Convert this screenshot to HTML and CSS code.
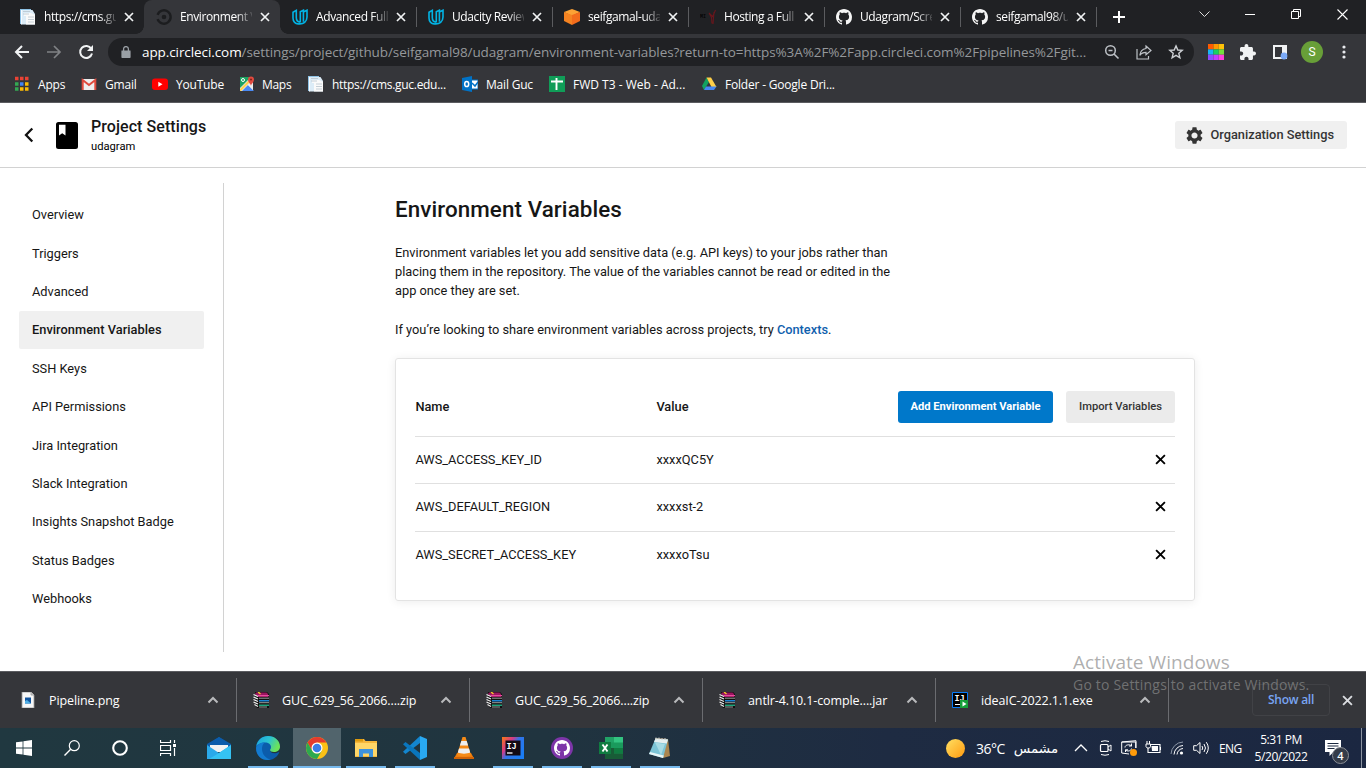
FILE: index.html
```html
<!DOCTYPE html>
<html lang="en">
<head>
<meta charset="utf-8">
<title>Environment Variables</title>
<link rel="stylesheet" href="styles.css">
</head>
<body>
<svg class="defs" width="0" height="0" aria-hidden="true">
  <defs>
    <symbol id="close" viewBox="0 0 10 10"><path d="M1 1l8 8M9 1L1 9" fill="none" stroke="currentColor" stroke-width="1.700"/></symbol>
    <symbol id="up" viewBox="0 0 12 8"><path d="M1.500 6.500L6 2l4.500 4.500" fill="none" stroke="currentColor" stroke-width="2"/></symbol>
    <symbol id="github" viewBox="0 0 16 16"><path fill="currentColor" d="M8 0C3.580 0 0 3.580 0 8c0 3.540 2.290 6.530 5.470 7.590.4.070.55-.17.55-.38 0-.19-.01-.82-.01-1.490-2.010.37-2.530-.49-2.690-.94-.09-.23-.48-.94-.82-1.130-.28-.15-.68-.52-.01-.53.63-.01 1.080.58 1.230.82.72 1.210 1.870.87 2.330.66.070-.52.28-.87.51-1.070-1.780-.2-3.640-.89-3.640-3.950 0-.87.31-1.590.82-2.150-.08-.2-.36-1.020.08-2.120 0 0 .67-.21 2.200.82.64-.18 1.320-.27 2-.27s1.360.09 2 .27c1.530-1.040 2.200-.82 2.200-.82.44 1.100.16 1.920.08 2.120.51.56.82 1.270.82 2.150 0 3.070-1.870 3.750-3.650 3.950.29.25.54.73.54 1.480 0 1.070-.01 1.930-.01 2.200 0 .21.15.46.55.38A8.010 8.010 0 0 0 16 8c0-4.420-3.580-8-8-8z"/></symbol>
    <symbol id="page" viewBox="0 0 16 16"><path d="M0 0h11v15H0z" fill="#8fc3e6"/><path d="M1.500 1h11l2.500 4v10.500H1.500z" fill="#dcecf7"/><path d="M4 4h7l4 2v9.500H6V7H4z" fill="#fafafa"/><path d="M3 2.500h7M3 5h6M8 8h6M8 10.500h6M8 13h6" stroke="#b8c4cd" stroke-width=".8"/><path d="M1.500 1v14.500" stroke="#f7fbff" stroke-width="1"/></symbol>
    <symbol id="udacity" viewBox="0 0 16 16"><path d="M6.800 14.800C3.300 15.200 1 12.600 1 9V3.200L4.300 1.400V8.500C4.300 11.300 5.500 13 8.300 13.300M8.300 13.300V2.800L11.400 1.200V12.700M6.800 14.800C11.500 15.300 15 12.500 15 8V1.200L11.400 3" fill="none" stroke="#02b3e4" stroke-width="1.600"/></symbol>
    <symbol id="winrar" viewBox="0 0 16 16"><path d="M2 0h12l2 2v14H4L2 13z" fill="#101010"/><path d="M3 .5h10.500L15 2v3H5L2 2z" fill="#9c1560"/><path d="M5 3h11v1.200H5z" fill="#e84c9f"/><path d="M6 8h10v1.500H6z" fill="#1a83d1"/><path d="M6 12.500h10V14H6z" fill="#1fa37a"/><path d="M6 6.200h10M6 10.700h10M6 15h8" stroke="#d8d8d8" stroke-width=".7"/><path d="M.5 2.500l4.500 2M.5 5l4.500 2M.5 7.500l4.500 2M.5 10l4.500 2M1.500 12.500l3.500 2" stroke="#eee" stroke-width="1.300"/><path d="M5 0l2.500 2" stroke="#f4ca28" stroke-width="1.500"/></symbol>
  </defs>
</svg>

<div class="tabstrip">
  <div class="tab"><svg class="fav"><use href="#page"/></svg><span class="tab-title">https://cms.gu</span><svg class="x"><use href="#close"/></svg></div>
  <div class="tab active"><svg class="fav" viewBox="0 0 16 16"><path d="M1.600 5.800A6.700 6.700 0 1 1 1.600 10.200" fill="none" stroke="#1c1d1f" stroke-width="2.400"/><circle cx="8" cy="8" r="2.300" fill="#1c1d1f"/></svg><span class="tab-title">Environment V</span><svg class="x"><use href="#close"/></svg></div>
  <div class="tab sep"><svg class="fav"><use href="#udacity"/></svg><span class="tab-title">Advanced Full</span><svg class="x"><use href="#close"/></svg></div>
  <div class="tab sep"><svg class="fav"><use href="#udacity"/></svg><span class="tab-title">Udacity Review</span><svg class="x"><use href="#close"/></svg></div>
  <div class="tab sep"><svg class="fav" viewBox="0 0 16 16"><path d="M8 0l8 3-8 4-8-4z" fill="#fca235"/><path d="M0 3l8 3v10l-8-4z" fill="#f58321"/><path d="M16 3L8 6v10l8-4z" fill="#f36c1c"/></svg><span class="tab-title">seifgamal-uda</span><svg class="x"><use href="#close"/></svg></div>
  <div class="tab sep"><svg class="fav" viewBox="0 0 16 16"><text x="0" y="9" font-family="Liberation Mono" font-weight="700" font-size="5" fill="#050505">MI</text><path d="M9 4l2.500 4.500.5 6M15.500 1l-3 7M14 3l-1 12M9 4l4 4" fill="none" stroke="#69161c" stroke-width="1.100"/></svg><span class="tab-title">Hosting a Full</span><svg class="x"><use href="#close"/></svg></div>
  <div class="tab sep"><svg class="fav"><use href="#github"/></svg><span class="tab-title">Udagram/Scre</span><svg class="x"><use href="#close"/></svg></div>
  <div class="tab sep"><svg class="fav"><use href="#github"/></svg><span class="tab-title">seifgamal98/u</span><svg class="x"><use href="#close"/></svg></div>
  <svg class="newtab" viewBox="0 0 12 12"><path d="M6 0v12M0 6h12" stroke="#fff" stroke-width="2"/></svg>
  <div class="winctl">
    <svg width="11" height="12" viewBox="0 0 11 12"><path d="M.5 3.500l5 5 5-5" fill="none" stroke="#ddd"/></svg>
    <svg width="11" height="12" viewBox="0 0 11 12"><path d="M0 6.500h10" stroke="#fff"/></svg>
    <svg width="11" height="12" viewBox="0 0 11 12"><path d="M.5 3.500h7v7h-7zM2.500 3.500v-2h7v7h-2" fill="none" stroke="#fff"/></svg>
    <svg width="11" height="12" viewBox="0 0 11 12"><path d="M.5 1.500l10 10M10.500 1.500l-10 10" stroke="#fff" stroke-width="1.100"/></svg>
  </div>
</div>

<div class="toolbar">
  <svg class="nav" viewBox="0 0 16 16"><path d="M15 8H2M8 2L2 8l6 6" fill="none" stroke="#f1f3f4" stroke-width="2"/></svg>
  <svg class="nav" viewBox="0 0 16 16"><path d="M1 8h13M8 2l6 6-6 6" fill="none" stroke="#808285" stroke-width="1.700"/></svg>
  <svg class="nav" viewBox="0 0 16 16"><path d="M13.300 4.800A6 6 0 1 0 14 9.500" fill="none" stroke="#f1f3f4" stroke-width="2"/><path d="M15 1v6H9z" fill="#f1f3f4"/></svg>
  <div class="omnibox">
    <svg class="lock" viewBox="0 0 10 12"><path d="M1 4.500h8c.6 0 .6.300.6.700v6c0 .4-.3.800-.8.800H1.200c-.5 0-.8-.4-.8-.8v-6c0-.4 0-.7.600-.7z" fill="#9aa0a6"/><path d="M2.600 5V3a2.400 2.400 0 0 1 4.800 0v2" fill="none" stroke="#9aa0a6" stroke-width="1.300"/></svg>
    <span class="url"><b>app.circleci.com</b>/settings/project/github/seifgamal98/udagram/environment-variables?return-to=https%3A%2F%2Fapp.circleci.com%2Fpipelines%2Fgit...</span>
    <svg class="oi" viewBox="0 0 16 16"><circle cx="6.500" cy="6.500" r="4.800" fill="none" stroke="#bdc1c6" stroke-width="1.500"/><path d="M10 10l4.500 4.500M4.500 6.500h4" stroke="#bdc1c6" stroke-width="1.600"/></svg>
    <svg class="oi" viewBox="0 0 16 16"><path d="M1 5v10h11.500v-3" fill="none" stroke="#bdc1c6" stroke-width="1.200"/><path d="M10 2l5 4.500-5 4.300V8.300C7 8.300 5.200 9.200 3.800 11.300 4.200 8 6 5 10 4.500z" fill="none" stroke="#bdc1c6" stroke-width="1.200"/></svg>
    <svg class="oi" viewBox="0 0 16 16"><path d="M8 1.900l1.800 4.100 4.400.4-3.400 2.900 1.100 4.500L8 11.400l-3.900 2.400 1.100-4.500-3.400-2.900 4.400-.4z" fill="none" stroke="#cdd0d4" stroke-width="1.400"/></svg>
  </div>
  <div class="exts">
    <svg viewBox="0 0 16 16"><path fill="#ff5a00" d="M0 0h5.400v5.400H0z"/><path fill="#ff9800" d="M5.400 0h5.300v5.400H5.400z"/><path fill="#ffc107" d="M10.700 0H16v5.400h-5.300z"/><path fill="#18b7f5" d="M0 5.400h5.400v5.300H0z"/><path fill="#17d163" d="M5.400 5.400h5.300v5.300H5.400z"/><path fill="#74df3b" d="M10.700 5.400H16v5.300h-5.300z"/><path fill="#8b4dff" d="M0 10.700h5.400V16H0z"/><path fill="#c13dff" d="M5.400 10.700h5.300V16H5.400z"/><path fill="#ff3ddd" d="M10.700 10.700H16V16h-5.300z"/></svg>
    <svg viewBox="2 1 21 21"><path fill="#f1f3f4" d="M20.500 11H19V7c0-1.100-.9-2-2-2h-4V3.500C13 2.120 11.880 1 10.500 1S8 2.120 8 3.500V5H4c-1.100 0-1.990.9-1.990 2v3.800H3.500c1.490 0 2.700 1.210 2.700 2.700s-1.210 2.700-2.700 2.700H2V20c0 1.100.9 2 2 2h3.800v-1.500c0-1.490 1.210-2.700 2.700-2.700s2.700 1.210 2.700 2.700V22H17c1.100 0 2-.9 2-2v-4h1.500c1.380 0 2.500-1.120 2.500-2.500S21.880 11 20.500 11z"/></svg>
    <svg viewBox="0 0 16 16"><path d="M2 2h12v12H2z" fill="none" stroke="#f1f3f4" stroke-width="2"/><path d="M10 2h4v7h-4z" fill="#f1f3f4"/><circle cx="12" cy="12" r="3.400" fill="#7baaf7"/></svg>
    <span class="avatar">S</span>
    <svg viewBox="0 0 16 16"><g fill="#e8eaed"><circle cx="8" cy="3" r="1.600"/><circle cx="8" cy="8" r="1.600"/><circle cx="8" cy="13" r="1.600"/></g></svg>
  </div>
</div>

<div class="bookmarks">
  <svg viewBox="0 0 16 16"><path stroke="#ea4335" stroke-width="3.500" stroke-dasharray="3.500 1.500" d="M1 2.500h14"/><path stroke="#34a853" stroke-width="3.500" d="M1 8h3.500M1 13h3.500"/><path stroke="#4285f4" stroke-width="3.500" d="M6 8h3.500"/><path stroke="#fbbc04" stroke-width="3.500" d="M11 8h3.500M6 13h3.500M11 13h3.500"/></svg><span>Apps</span>
  <svg viewBox="0 0 16 16"><path d="M1 3h14v11H1z" fill="#eee"/><path d="M1.700 14V4L8 9l6.300-5v10" fill="none" stroke="#df4b3e" stroke-width="2"/></svg><span>Gmail</span>
  <svg viewBox="0 0 16 16"><rect y="2.500" width="16" height="11.500" rx="3" fill="#f00"/><path d="M6.300 5.700l4.200 2.500-4.200 2.500z" fill="#fff"/></svg><span>YouTube</span>
  <svg viewBox="0 0 16 16"><path d="M1 1h13v14H1z" fill="#e9e9e9"/><path d="M1 1h11L1 12z" fill="#1ca261"/><path d="M3 15l6-6 6 6z" fill="#4a89f3"/><path d="M1 13L12 2l1 2L2 15H1z" fill="#ffd04b"/><path d="M9 9l5 5V6z" fill="#eee"/><circle cx="4" cy="4" r="1.500" fill="none" stroke="#fff"/><path d="M12 10c0-2-3-3.500-3-6.500a3 3 0 0 1 6 0c0 3-3 4.500-3 6.500z" fill="#e04a3f"/><circle cx="12" cy="3.500" r="1" fill="#7b2018"/></svg><span class="tight">Maps</span>
  <svg viewBox="0 0 16 16"><use href="#page"/></svg><span class="tight">https://cms.guc.edu...</span>
  <svg viewBox="0 0 16 16"><path d="M8 4h8v9H8z" fill="#fff" stroke="#0072c6"/><path d="M10 7l3 3 3-4" stroke="#0072c6" fill="none" stroke-width="1.500"/><path d="M0 2l10-2v16L0 14z" fill="#0072c6"/><ellipse cx="4.700" cy="8" rx="2" ry="2.600" fill="none" stroke="#fff" stroke-width="1.500"/></svg><span>Mail Guc</span>
  <svg viewBox="0 0 16 16"><path d="M0 0h16v16H0z" fill="#109d58"/><path d="M2 5.500h12M7.500 2v12" stroke="#fff" stroke-width="1.900"/></svg><span class="loose">FWD T3 - Web - Ad...</span>
  <svg viewBox="0 0 16 16"><path d="M5.500 1.500L1 10l2 4 5-8z" fill="#12a260"/><path d="M5.500 1.500H10L15.500 11h-5z" fill="#ffcf48"/><path d="M3 14l2-3.500h10.500L13 14z" fill="#4688f4"/></svg><span>Folder - Google Dri...</span>
</div>

<div class="page">
  <header class="page-head">
    <svg class="back" viewBox="0 0 10 16"><path d="M8.300 1.500L2 8l6.300 6.500" fill="none" stroke="#111" stroke-width="2.300"/></svg>
    <svg class="book" viewBox="0 0 22 27"><path d="M2.500 0h17A2.500 2.500 0 0 1 22 2.500v22a2.500 2.500 0 0 1-2.500 2.500h-17A2.500 2.500 0 0 1 0 24.500v-22A2.500 2.500 0 0 1 2.500 0z" fill="#000"/><path d="M3 2.700h6.500v10.800L6.200 11.300 3 13.500z" fill="#fff"/></svg>
    <div class="names"><div class="ptitle">Project Settings</div><div class="pname">udagram</div></div>
    <button class="org"><svg viewBox="2 2 20 20"><path fill="#343434" d="M19.140 12.940c.04-.3.060-.61.060-.94 0-.32-.02-.64-.07-.94l2.030-1.580c.18-.14.23-.41.12-.61l-1.920-3.320c-.12-.22-.37-.29-.59-.22l-2.390.96c-.5-.38-1.030-.7-1.620-.94l-.36-2.540c-.04-.24-.24-.41-.48-.41h-3.840c-.24 0-.43.17-.47.41l-.36 2.540c-.59.24-1.130.57-1.620.94l-2.390-.96c-.22-.08-.47 0-.59.22L2.740 8.870c-.12.21-.08.47.12.61l2.030 1.580c-.05.3-.09.63-.09.94s.02.64.07.94l-2.030 1.580c-.18.14-.23.41-.12.61l1.920 3.320c.12.22.37.29.59.22l2.390-.96c.5.38 1.030.7 1.620.94l.36 2.540c.05.24.24.41.48.41h3.840c.24 0 .44-.17.47-.41l.36-2.540c.59-.24 1.130-.56 1.620-.94l2.390.96c.22.080.47 0 .59-.22l1.920-3.320c.12-.22.070-.47-.12-.61l-2.010-1.580zM12 15.600c-1.980 0-3.600-1.620-3.600-3.600s1.620-3.600 3.600-3.600 3.600 1.620 3.600 3.600-1.620 3.600-3.600 3.600z"/></svg>Organization Settings</button>
  </header>
  <div class="page-body">
    <nav class="side">
      <a>Overview</a><a>Triggers</a><a>Advanced</a><a class="on">Environment Variables</a><a>SSH Keys</a><a>API Permissions</a><a>Jira Integration</a><a>Slack Integration</a><a>Insights Snapshot Badge</a><a>Status Badges</a><a>Webhooks</a>
    </nav>
    <main class="main">
      <h1>Environment Variables</h1>
      <p>Environment variables let you add sensitive data (e.g. API keys) to your jobs rather than placing them in the repository. The value of the variables cannot be read or edited in the app once they are set.</p>
      <p>If you’re looking to share environment variables across projects, try <a class="link">Contexts</a>.</p>
      <section class="card">
        <div class="row head"><span>Name</span><span>Value</span><span class="btns"><button class="btn primary">Add Environment Variable</button><button class="btn">Import Variables</button></span></div>
        <div class="row"><span>AWS_ACCESS_KEY_ID</span><span>xxxxQC5Y</span><svg class="del"><use href="#close"/></svg></div>
        <div class="row"><span>AWS_DEFAULT_REGION</span><span>xxxxst-2</span><svg class="del"><use href="#close"/></svg></div>
        <div class="row"><span>AWS_SECRET_ACCESS_KEY</span><span>xxxxoTsu</span><svg class="del"><use href="#close"/></svg></div>
      </section>
    </main>
  </div>
</div>

<div class="downloads">
  <div class="dl"><svg class="fi" viewBox="0 0 16 16"><path d="M2 0h9l3 3v13H2z" fill="#f7f7f7" stroke="#999" stroke-width=".8"/><path d="M11 0v3h3" fill="#ccc" stroke="#999" stroke-width=".8"/><path d="M5 5.500h6v6H5z" fill="#12559e"/><path d="M5 9l2-1 4 3.500H5z" fill="#4fb0e6"/></svg><span>Pipeline.png</span><svg class="up"><use href="#up"/></svg></div>
  <div class="dl"><svg class="fi"><use href="#winrar"/></svg><span>GUC_629_56_2066....zip</span><svg class="up"><use href="#up"/></svg></div>
  <div class="dl"><svg class="fi"><use href="#winrar"/></svg><span>GUC_629_56_2066....zip</span><svg class="up"><use href="#up"/></svg></div>
  <div class="dl"><svg class="fi"><use href="#winrar"/></svg><span>antlr-4.10.1-comple....jar</span><svg class="up"><use href="#up"/></svg></div>
  <div class="dl"><svg class="fi" viewBox="0 0 16 16"><path d="M.5.5h15v15H.5z" fill="#000" stroke="#087cfa"/><text x="2.500" y="9" font-family="Liberation Mono" font-weight="700" font-size="8.500" fill="#fff">IJ</text><path d="M3 12.500h5" stroke="#fff"/><path d="M8 8h8v8H8z" fill="#16a03a"/><path d="M10.500 9.500l4 2.500-4 2.500z" fill="#fff"/></svg><span>ideaIC-2022.1.1.exe</span><svg class="up"><use href="#up"/></svg></div>
  <span class="showall">Show all</span>
  <svg class="dlx"><use href="#close"/></svg>
</div>

<div class="taskbar">
  <div class="sys">
    <svg width="16" height="16" viewBox="0 0 16 16"><path d="M0 2.300L6.600 1.400v6.200H0zM7.400 1.300L16 0v7.600H7.400zM0 8.400h6.600v6.200L0 13.700zM7.400 8.400H16V16l-8.600-1.300z" fill="#fff"/></svg>
    <svg width="16" height="16" viewBox="0 0 16 16"><circle cx="10.300" cy="5.700" r="5" fill="none" stroke="#fff" stroke-width="1.200"/><path d="M6.700 9.300L.5 15.500" stroke="#fff" stroke-width="1.400"/></svg>
    <svg width="16" height="16" viewBox="0 0 16 16"><circle cx="8" cy="8" r="6.800" fill="none" stroke="#fff" stroke-width="2.100"/></svg>
    <svg width="16" height="16" viewBox="0 0 16 16"><path d="M.5 0v2.500h10V0M.5 16v-2.500h10V16M.5 5.500h10v5H.5zM14.500 0v3M14.500 8v8" fill="none" stroke="#fff" stroke-width="1.200"/><path d="M13 4h3v3h-3z" fill="#fff"/></svg>
  </div>
  <div class="apps">
    <div class="app"><svg viewBox="0 0 24 24"><path d="M0 9L12 1l12 8v3H0z" fill="#0b5cab"/><path d="M3 8h18v8H3z" fill="#f2f2f2"/><path d="M0 9l12 8 12-8v14H0z" fill="#2aa9ea"/><path d="M24 9v14H2l10-6z" fill="#35c2f3"/><path d="M2 8.500h20L12 15.500z" fill="#f2f2f2"/><path d="M0 8L12 1l12 7v1H0z" fill="#0b5cab"/></svg></div>
    <div class="app run"><svg viewBox="0 0 24 24"><defs><linearGradient id="eg" x1="0" y1="0" x2="1" y2=".4"><stop offset="0" stop-color="#1aa3e0"/><stop offset=".55" stop-color="#2bc3d2"/><stop offset="1" stop-color="#6be35a"/></linearGradient></defs><circle cx="12" cy="12" r="12" fill="#0b5cab"/><path d="M14 13.500c0 2 1.500 3.800 4.500 3.800 2 0 3.500-.6 5-1.500l1.500 1v-5h-8z" fill="#20353f"/><path d="M.3 10C1.500 4 6 0 12 0c7 0 12 5 12 10.500 0 4-3 5.500-6 5.500-2.500 0-4-1-4-2 0-.8 1-1 1-3C15 8.500 12.500 6.500 9 6.500 5 6.500 1.500 8.500.3 10z" fill="url(#eg)"/><path d="M.1 12C.5 8.500 4.500 6.500 9 6.500c-2.500 1.500-3 4-3 6.500 0 5 3.500 9.500 9 10.600C7 25.500 0 20.500.1 12z" fill="#137bd0"/></svg></div>
    <div class="app run cur"><svg viewBox="-12 -12 24 24"><circle r="11" fill="#fbc116"/><path d="M-9.500-5.500A11 11 0 0 1 9.500-5.500H0L-4.800 2.700z" fill="#e33b2e"/><path d="M-9.500-5.500A11 11 0 0 0 0 11L4.800 2.700A5.500 5.500 0 0 1-4.800 2.700z" fill="#2da94f"/><circle r="5.500" fill="#fff"/><circle r="4.300" fill="#3a7de8"/></svg></div>
    <div class="app run"><svg viewBox="0 0 24 24"><path d="M1 3h9l1.500 2H23v16H1z" fill="#f6b73c"/><path d="M1 7h22v13H1z" fill="#ffd667"/><path d="M1 3h8v2.500H1z" fill="#dd9a0e"/><path d="M5 21v-8h14v8h-4v-3.500H9V21z" fill="#3d92dd"/></svg></div>
    <div class="app run"><svg viewBox="0 0 24 24"><path d="M17 0l7 3v18l-7 3z" fill="#29a9f2"/><path d="M17 0v7L2.500 18 0 15.800z" fill="#1386cf"/><path d="M0 8.200L2.500 6 17 17v7z" fill="#0a76bd"/></svg></div>
    <div class="app"><svg viewBox="0 0 24 24"><path d="M5 17h14l3 5.500H2z" fill="#ef7d0c"/><path d="M10.500 1h3L19 19c-3 2-11 2-14 0z" fill="#f58a16"/><path d="M9.300 5h5.400l1.400 4.500H7.900zM7 12.500h10l1.200 4c-3 1.500-9.400 1.500-12.400 0z" fill="#eee"/><path d="M2 21h20v2H2z" fill="#cf6206"/></svg></div>
    <div class="app run"><svg viewBox="0 0 24 24"><defs><linearGradient id="ij" x1="0" y1="0" x2="1" y2=".7"><stop offset="0" stop-color="#f97a12"/><stop offset=".35" stop-color="#d43a86"/><stop offset=".55" stop-color="#3274e8"/><stop offset="1" stop-color="#1a7df5"/></linearGradient></defs><path d="M1 1h22v22H1z" fill="url(#ij)"/><path d="M4.500 4.500h15v15h-15z" fill="#120a14"/><text x="5.500" y="12.500" font-family="Liberation Mono" font-weight="700" font-size="8.500" fill="#fff">IJ</text><path d="M6 17h5.500" stroke="#fff" stroke-width="1.300"/></svg></div>
    <div class="app run"><svg viewBox="0 0 24 24"><circle cx="12" cy="12" r="11" fill="#7d35a8"/><svg x="4" y="4" width="16" height="16" color="#fff"><use href="#github"/></svg></svg></div>
    <div class="app run"><svg viewBox="0 0 24 24"><path d="M6 1h18v22H6z" fill="#1a9a5c"/><path d="M6 1h9v5.500H6z" fill="#21a366"/><path d="M15 1h9v5.500h-9z" fill="#33c481"/><path d="M6 12h9v11H6z" fill="#185c37"/><path d="M15 12h9v5.500h-9z" fill="#107c41"/><path d="M15 17.500h9V23h-9z" fill="#185c37"/><path d="M0 6h12v12H0z" fill="#107c41"/><path d="M3.500 8.500l5 7M8.500 8.500l-5 7" stroke="#fff" stroke-width="1.900"/></svg></div>
    <div class="app run"><svg viewBox="0 0 24 24"><path d="M7 2l13 1 2 17-7 2z" fill="#aa8650"/><path d="M7.500 2.500L20 3.500 15 22 1 18z" fill="#7cc4d6"/><path d="M7.500 2.500L20 3.500l-1.300 4L6 6z" fill="#e6eff0"/><path d="M7 6.500L17 8l-4 11z" fill="#a6dbe5"/><path d="M1 18l14 4 .8-2.500L2 16z" fill="#e7f5f7"/><path d="M8 1.500v2M11 1.500v2M14 2v2M17 2v2" stroke="#ccc"/></svg></div>
  </div>
  <div class="weather"><i class="sun"></i><span>36°C</span><span class="ar" lang="ar" dir="rtl">مشمس</span></div>
  <div class="tray">
    <svg viewBox="0 0 16 16"><path d="M2 11l6-6 6 6" fill="none" stroke="#fff" stroke-width="1.300"/></svg>
    <svg viewBox="0 0 16 16"><rect x="3.500" y="4.500" width="7.500" height="7" rx="1" fill="none" stroke="#fff" stroke-width="1.200"/><path d="M11 7l3-2v6l-3-2M4 1.500q4-1.500 8 0M4 14.500q4 1.500 8 0" fill="none" stroke="#fff"/></svg>
    <svg viewBox="0 0 16 16"><path d="M8 14L.7 13V2h14v6M.7 2L15 .7V8" fill="none" stroke="#fff"/><path d="M4 7.500c0-3 5-3.500 6.500-1.500M10.500 3.500V6H8M10.500 8.500c-.5 3-4.500 3-6 1.500M4.500 12V9.800H7" fill="none" stroke="#fff"/><circle cx="12.500" cy="12.500" r="3.500" fill="#ff9b0a"/></svg>
    <svg viewBox="0 0 16 16"><path d="M5.500 4.500H15v8H5.500M3 8v4.500h2.500" fill="none" stroke="#fff" stroke-width="1.100"/><path d="M6.500 6H13v5H7zM15 7h1v3h-1z" fill="#fff"/><path d="M1 4h4.500v2.500L4.500 8H2.200L1 6.500zM2 1v3M4.500 1v3" fill="none" stroke="#fff"/></svg>
    <svg viewBox="0 0 16 16"><g fill="none" stroke="#fff"><path d="M14 5.500A9.500 9.500 0 0 0 5 14.500M14 8.500a6.500 6.500 0 0 0-6 6M14 11.500"/><path d="M14 2A12.500 12.500 0 0 0 2 14" stroke="#8d98a8"/></g><circle cx="12.500" cy="13" r="1.600" fill="#fff"/></svg>
    <svg viewBox="0 0 16 16"><path d="M.7 5.700h2.800L7 2.500v11l-3.500-3.200H.7zM9 6q1.500 2 0 4M11 4q3 4 0 8M13.300 2.200q4 5.800 0 11.600" fill="none" stroke="#fff"/></svg>
    <span class="eng">ENG</span>
  </div>
  <div class="clock"><span>5:31 PM</span><span>5/20/2022</span></div>
  <div class="notif"><svg width="17" height="17" viewBox="0 0 17 17"><path d="M0 0h16v12H8.500L4.500 16v-4H0z" fill="#fff"/><path d="M2.500 3.500h11M2.500 6h11M2.500 8.500h7" stroke="#1c2940"/></svg><span class="count">4</span></div>
</div>

<div class="activate"><div class="a1">Activate Windows</div><div class="a2">Go to Settings to activate Windows.</div></div>
</body>
</html>
```
FILE: styles.css
```css
* { box-sizing: border-box; }
body { margin: 0; width: 1366px; height: 768px; overflow: hidden; background: #fff; font: 12px "Open Sans", "Noto Sans", sans-serif; color: #fff; display: flex; flex-direction: column; position: relative; }
svg { display: block; flex: none; }
.defs { position: absolute; }
button { border: 0; margin: 0; font: inherit; }

/* tab strip */
.tabstrip { height: 34px; background: #202124; display: flex; align-items: center; padding-left: 8px; flex: none; }
.tab { width: 136px; height: 34px; padding-left: 12px; display: flex; align-items: center; flex: none; }
.tab .fav { width: 16px; height: 16px; color: #f5f5f5; }
.tab-title { width: 72px; margin-left: 8px; overflow: hidden; white-space: nowrap; letter-spacing: -.4px; line-height: 18px; -webkit-mask-image: linear-gradient(90deg, #000 56px, transparent 75px); mask-image: linear-gradient(90deg, #000 56px, transparent 75px); }
.tab .x { width: 10px; height: 10px; margin-left: 8px; color: #f1f3f4; }
.tab.active { background: #35363a; border-radius: 8px 8px 0 0; position: relative; }
.tab.active::before, .tab.active::after { content: ""; position: absolute; bottom: 0; width: 8px; height: 8px; }
.tab.active::before { left: -8px; background: radial-gradient(circle at 0 0, transparent 7.500px, #35363a 8px); }
.tab.active::after { right: -8px; background: radial-gradient(circle at 100% 0, transparent 7.500px, #35363a 8px); }
.tab.sep { box-shadow: none; }
.tab.sep + .tab.sep, .newtab { background: linear-gradient(#5b5c5f, #5b5c5f) 0 50% / 1px 20px no-repeat; }
.newtab { width: 29px; height: 20px; padding: 4px 0 4px 17px; }
.winctl { display: flex; gap: 35px; margin-left: auto; padding: 0 18px 6px 0; }

/* address row */
.toolbar { height: 36px; background: #35363a; display: flex; align-items: center; padding-left: 14px; flex: none; }
.nav { width: 16px; height: 16px; margin-right: 16px; }
.omnibox { width: 1086px; height: 28px; margin-left: -2px; border-radius: 14px; background: #202124; display: flex; align-items: center; padding-left: 13px; }
.lock { width: 10px; height: 12px; margin-right: 11px; margin-top: -1px; }
.url { width: 962px; flex: none; color: #95989b; font-size: 13.500px; letter-spacing: -.086px; white-space: nowrap; line-height: 20px; }
.url b { font-weight: 400; color: #fff; }
.oi { width: 16px; height: 16px; margin-right: 16px; }
.exts { display: flex; align-items: center; gap: 16px; padding-left: 14px; }
.exts svg { width: 16px; height: 16px; }
.avatar { width: 22px; height: 22px; margin: 0 -3px; border-radius: 50%; background: #689f38; font: 12px/22px Roboto, sans-serif; text-align: center; }

/* bookmarks */
.bookmarks { height: 33px; background: #35363a; border-bottom: 1px solid #5b5c60; display: grid; grid-template-columns: 24px 43px 24px 47px 24px 63px 23px 46px 24px 130px 24px 63px 24px 128px 24px 120px; align-items: center; padding-left: 14px; white-space: nowrap; letter-spacing: -.2px; padding-bottom: 4px; flex: none; }
.bookmarks svg { width: 16px; height: 16px; }
.bookmarks .tight { letter-spacing: -.3px; }
.bookmarks .loose { letter-spacing: 0; }

/* web page */
.page { height: 568px; flex: none; background: #fff; color: #161616; font: 12.800px/19.200px Roboto, sans-serif; }
.page-head { height: 65px; border-bottom: 1px solid #d2d2d2; display: flex; align-items: center; padding: 0 19px 0 24px; }
.back { width: 10px; height: 16px; }
.book { width: 22px; height: 27px; margin: 0 13px 0 22px; }
.ptitle { font-size: 16px; font-weight: 500; line-height: 22px; letter-spacing: .07px; }
.pname { font-size: 11.200px; line-height: 17px; color: #000; }
.org { margin-left: auto; width: 172px; height: 28px; padding: 0 0 0 11px; border-radius: 3px; background: #f0f0f0; color: #343434; font-weight: 500; display: flex; align-items: center; gap: 7.500px; white-space: nowrap; }
.org svg { width: 17px; height: 17px; }
.page-body { display: flex; padding-top: 15px; }
.side { width: 224px; height: 469px; border-right: 1px solid #d2d2d2; padding: 12.600px 19px 0; }
.side a { display: block; padding: 9.600px 0 9.600px 13px; }
.side .on { background: #f0f0f0; border-radius: 2px; font-weight: 500; letter-spacing: .04px; }
.main { width: 800px; margin-left: 171px; padding-top: 11px; }
h1 { margin: 0 0 19px; font-size: 22.400px; font-weight: 500; line-height: 30px; letter-spacing: .08px; }
p { margin: 0 0 19.200px; width: 512px; }
.link { color: #0f61ae; font-weight: 500; }
.card { height: 243px; border: 1px solid #e3e3e3; border-radius: 3px; box-shadow: 0 1px 10px rgba(0,0,0,.08); padding: 19px 19px 0; }
.row { display: grid; grid-template-columns: 241px 242px 1fr; align-items: center; height: 47.500px; border-top: 1px solid #e0e0e0; padding: 0 0 1px .4px; }
.row.head { height: 57.500px; border: 0; font-weight: 500; padding-bottom: 1.500px; }
.btns { display: flex; gap: 13px; margin: 1px 0 0 -.4px; }
.btn { width: 109px; height: 32px; border-radius: 3px; background: #ebebeb; color: #343434; font: 500 11.200px Roboto, sans-serif; padding: 0 0 1px; white-space: nowrap; }
.btn.primary { width: 155px; background: #0078ca; color: #fff; font-weight: 700; letter-spacing: -.03px; }
.del { width: 11px; height: 11px; justify-self: end; margin-right: 9px; color: #000; }

/* downloads shelf */
.downloads { height: 57px; border-top: 1px solid #5b5c60; background: #35363a; display: flex; align-items: center; padding-left: 4px; flex: none; }
.dl { width: 233px; height: 44px; border-right: 1px solid #6b6c70; display: flex; align-items: center; padding: 0 17px 0 16px; white-space: nowrap; font-size: 12.500px; }
.dl span { margin-left: 13px; letter-spacing: -.1px; }
.fi { width: 16px; height: 16px; }
.up { width: 12px; height: 8px; margin-left: auto; color: #b9babc; }
.showall { width: 78px; height: 32px; margin-left: 83px; border: 1px solid #414246; border-radius: 4px; color: #79a5f3; font-weight: 600; line-height: 29px; text-align: center; letter-spacing: -.25px; }
.dlx { width: 11px; height: 11px; margin-left: 12px; color: #dadce0; }

/* taskbar */
.taskbar { height: 40px; background: linear-gradient(90deg, #203840, #20343f 40%, #1e2b42 65%, #1b2741); display: flex; align-items: center; flex: none; }
.sys { display: flex; gap: 32px; width: 195px; padding-left: 16px; }
.apps { display: flex; gap: 1px; width: 751px; }
.app { width: 48px; height: 40px; display: flex; align-items: center; justify-content: center; }
.app svg { width: 24px; height: 24px; }
.app.run { background: linear-gradient(#76b9ed, #76b9ed) 50% 100% / 40px 2px no-repeat; }
.app.cur { background: linear-gradient(#76b9ed, #76b9ed) 50% 100% / 48px 2px no-repeat #51646c; }
.app svg svg { width: 16px; height: 16px; }
.weather { display: flex; align-items: center; width: 127px; font-size: 14px; white-space: nowrap; }
.sun { width: 19px; height: 19px; margin-right: 11px; border-radius: 50%; background: linear-gradient(135deg, #ffe063, #ff9a0f); }
.weather span { letter-spacing: -.5px; }
.weather .ar { margin-left: 9px; font-size: 13.500px; letter-spacing: 0; font-family: "DejaVu Sans", sans-serif; }
.tray { display: flex; gap: 8px; align-items: center; width: 177px; }
.tray svg { width: 16px; height: 16px; }
.eng { margin-left: 2px; font-size: 12px; letter-spacing: -.6px; }
.clock { width: 62px; display: flex; flex-direction: column; align-items: center; line-height: 17px; letter-spacing: -.45px; }
.notif { position: relative; margin-left: 13px; width: 37px; height: 40px; padding-top: 12px; border-right: 1px solid #8b93a0; }
.count { position: absolute; left: 7px; top: 19px; width: 17px; height: 17px; border-radius: 50%; border: 1px solid #8b8f96; background: #353c49; font-size: 11px; font-weight: 600; line-height: 15px; text-align: center; }

/* system watermark, drawn over the desktop */
.activate { position: absolute; left: 1073px; top: 648px; color: rgba(140,140,140,.7); white-space: nowrap; }
.a1 { font-size: 19px; line-height: 28px; letter-spacing: .05px; }
.a2 { font-size: 14px; line-height: 18px; letter-spacing: .2px; }
```
